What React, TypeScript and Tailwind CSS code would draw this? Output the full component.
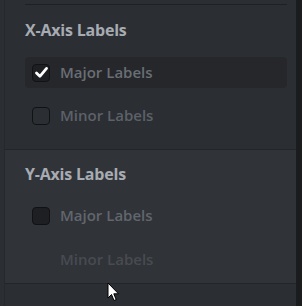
import React from "react";

function Check() {
  return (
    <svg width="15" height="15" viewBox="0 0 14 14" fill="none">
      <path d="M2.3 7.4 L5.5 10.6 L11.7 3.2" stroke="#ffffff" strokeWidth="2.6" strokeLinecap="round" strokeLinejoin="round" />
    </svg>
  );
}

function Row({ label, checked, box, highlight, textColor }: { label: string; checked?: boolean; box: "none" | "empty" | "filled"; highlight?: boolean; textColor: string }) {
  return (
    <div className={`flex items-center h-[31px] pl-[7px] gap-[10px] rounded-[4px] ${highlight ? "bg-[#25272b]" : ""}`}>
      {box === "none" ? (
        <div className="w-[18px] h-[18px]" />
      ) : (
        <div className={`w-[18px] h-[18px] rounded-[4px] border border-[#111214] flex items-center justify-center ${box === "filled" ? "bg-[#1e1f22]" : "bg-transparent"}`}>
          {checked && <Check />}
        </div>
      )}
      <span className={`text-[15px] font-semibold ${textColor}`} style={{ fontFamily: "'Open Sans', sans-serif" }}>{label}</span>
    </div>
  );
}

export default function App() {
  return (
    <div className="relative w-[302px] h-[306px] bg-[#2b2e33] flex overflow-hidden" style={{ fontFamily: "'Open Sans', sans-serif" }}>
      <div className="w-[5px] border-r border-[#26282c]" />
      <div className="flex-1 flex flex-col">
        <div className="h-[150px] border-b border-[#232529] pl-[20px] pr-[9px] pt-[4px] flex flex-col">
          <div className="h-[1px] bg-[#1e2023]" />
          <div className="mt-[13px] h-[24px] leading-[24px] text-[16px] font-bold tracking-[-0.2px] text-[#a7abb2]">X-Axis Labels</div>
          <div className="mt-[15px] flex flex-col gap-[12px]">
            <Row label="Major Labels" checked box="filled" highlight textColor="text-[#6a6e75]" />
            <Row label="Minor Labels" box="empty" textColor="text-[#5d6168]" />
          </div>
        </div>
        <div className="h-[134px] bg-[#303338] border-b border-[#232529] pl-[20px] pr-[9px] flex flex-col">
          <div className="mt-[12px] h-[24px] leading-[24px] text-[16px] font-bold tracking-[-0.2px] text-[#a7abb2]">Y-Axis Labels</div>
          <div className="mt-[14px] flex flex-col gap-[13px]">
            <Row label="Major Labels" box="filled" textColor="text-[#62666d]" />
            <Row label="Minor Labels" box="none" textColor="text-[#484b51]" />
          </div>
        </div>
        <div className="flex-1" />
      </div>
      <div className="w-[6px] bg-[#1b1c1e]" />
      <svg className="absolute left-[107px] top-[282px]" width="13" height="20" viewBox="0 0 13 20">
        <path d="M1 1 L1 16 L4.5 12.5 L7 18.5 L9.2 17.6 L6.8 11.8 L11.5 11.8 Z" fill="#ffffff" stroke="#000000" strokeWidth="1" strokeLinejoin="round" />
      </svg>
    </div>
  );
}
